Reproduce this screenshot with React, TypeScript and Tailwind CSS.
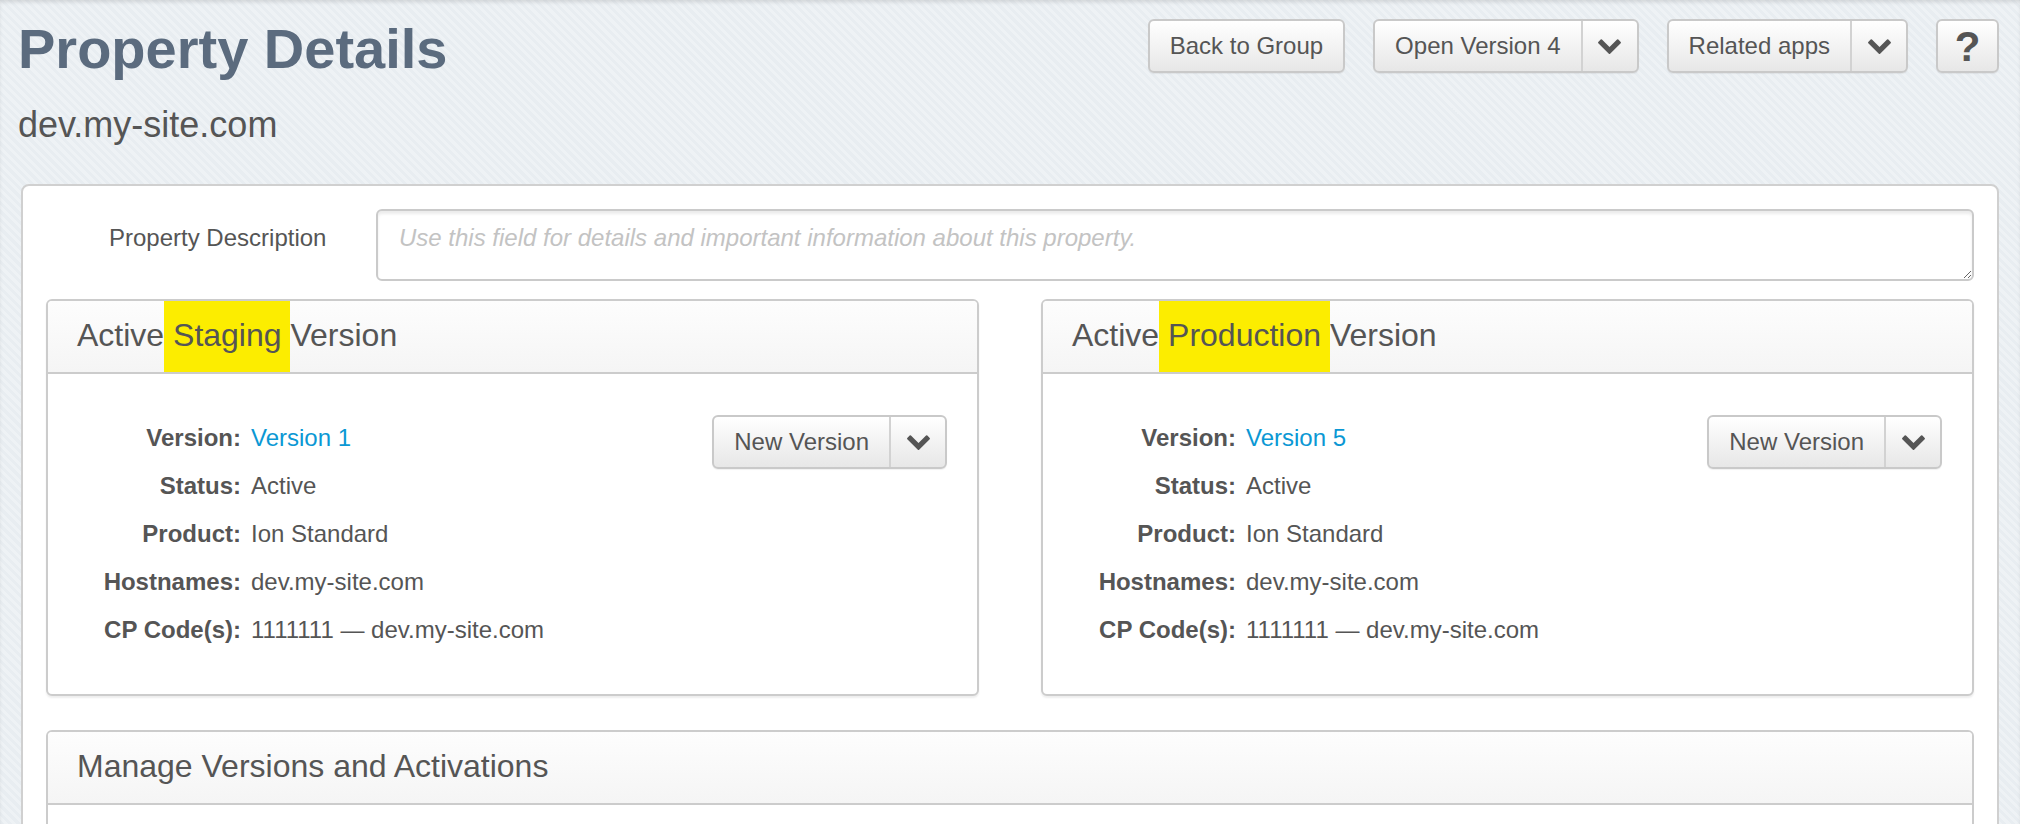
import React from "react";

const Chevron = () => (
  <svg viewBox="90 515 1612 1053" className="w-[23px] h-[15px]" fill="#555555">
    <path d="M1683 808l-742 741q-19 19-45 19t-45-19l-742-741q-19-19-19-45.5t19-45.5l166-165q19-19 45-19t45 19l531 531 531-531q19-19 45-19t45 19l166 165q19 19 19 45.5t-19 45.5z" />
  </svg>
);

const btnBase =
  "h-[54px] flex border-2 border-[#c9c9c9] rounded-[6px] bg-linear-to-b from-white to-[#e7e7e7] text-[24px] text-[#555555] shadow-[0_1px_1px_rgba(0,0,0,0.06)]";

function Button({ children }: { children: React.ReactNode }) {
  return <div className={`${btnBase} items-center px-[20px]`}>{children}</div>;
}

function SplitButton({ label }: { label: string }) {
  return (
    <div className={btnBase}>
      <div className="flex items-center px-[20px]">{label}</div>
      <div className="w-[56px] flex items-center justify-center border-l-2 border-[#d2d2d2]">
        <Chevron />
      </div>
    </div>
  );
}

function VersionPanel({ env, version }: { env: string; version: string }) {
  const rows: [string, React.ReactNode][] = [
    ["Version:", <span className="text-[#0b98d4]">{version}</span>],
    ["Status:", "Active"],
    ["Product:", "Ion Standard"],
    ["Hostnames:", "dev.my-site.com"],
    ["CP Code(s):", "1111111 \u2014 dev.my-site.com"],
  ];
  return (
    <div className="border-2 border-[#cccccc] rounded-[6px] bg-white shadow-[0_2px_2px_rgba(0,0,0,0.07)] overflow-hidden">
      <div className="h-[73px] flex items-stretch border-b-2 border-[#cccccc] bg-linear-to-b from-[#fdfdfd] to-[#f5f5f5] pl-[29px] text-[32px] text-[#555555]">
        <span className="flex items-center pb-[4px]">Active</span>
        <span className="flex items-center pb-[4px] bg-[#fced00] whitespace-pre">{` ${env} `}</span>
        <span className="flex items-center pb-[4px]">Version</span>
      </div>
      <div className="flex justify-between pt-[40px] pb-[40px] pr-[30px]">
        <div className="grid grid-cols-[193px_1fr] gap-x-[10px] text-[24px] text-[#555555]">
          {rows.map(([k, v]) => (
            <React.Fragment key={k}>
              <div className="h-[48px] flex items-center justify-end font-bold">{k}</div>
              <div className="h-[48px] flex items-center">{v}</div>
            </React.Fragment>
          ))}
        </div>
        <div className="mt-[1px]">
          <SplitButton label="New Version" />
        </div>
      </div>
    </div>
  );
}

export default function App() {
  return (
    <div className="h-[824px] w-full overflow-hidden bg-[repeating-linear-gradient(45deg,#e8edf1_0px,#e8edf1_3px,#eef2f5_3px,#eef2f5_6px)] shadow-[inset_0_3px_4px_-1px_rgba(0,0,0,0.12)] font-['Liberation_Sans',Arial,sans-serif]">
      <div className="flex justify-between items-start pl-[18px] pr-[21px] pt-[19px]">
        <div>
          <h1 className="mt-[2px] text-[56px] leading-[56px] font-bold text-[#5b6b7e]">Property Details</h1>
          <div className="mt-[28px] text-[36px] leading-[40px] text-[#555555]">dev.my-site.com</div>
        </div>
        <div className="flex items-start gap-[28px]">
          <Button>Back to Group</Button>
          <SplitButton label="Open Version 4" />
          <SplitButton label="Related apps" />
          <div className={`${btnBase} w-[63px] items-center justify-center text-[42px] font-bold`}>?</div>
        </div>
      </div>

      <div className="px-[21px] mt-[39px]">
        <div className="border-2 border-[#d0d0d0] rounded-[8px] bg-white p-[23px] min-h-[700px]">
          <div className="flex">
            <div className="w-[330px] shrink-0 pl-[63px] pt-[15px] text-[24px] leading-[28px] text-[#555555]">
              Property Description
            </div>
            <textarea
              className="flex-1 h-[72px] border-2 border-[#cacaca] rounded-[6px] shadow-[inset_0_3px_3px_rgba(0,0,0,0.08)] px-[21px] pt-[13px] text-[24px] leading-[28px] text-[#555555] outline-none placeholder:italic placeholder:text-[#c3c3c3]"
              placeholder="Use this field for details and important information about this property."
            />
          </div>

          <div className="mt-[18px] grid grid-cols-2 gap-[62px]">
            <VersionPanel env="Staging" version="Version 1" />
            <VersionPanel env="Production" version="Version 5" />
          </div>

          <div className="mt-[34px] border-2 border-[#cccccc] rounded-[6px] bg-white overflow-hidden">
            <div className="h-[73px] flex items-center pb-[4px] border-b-2 border-[#cccccc] bg-linear-to-b from-[#fdfdfd] to-[#f5f5f5] pl-[29px] text-[32px] text-[#555555]">
              Manage Versions and Activations
            </div>
            <div className="h-[200px]" />
          </div>
        </div>
      </div>
    </div>
  );
}
